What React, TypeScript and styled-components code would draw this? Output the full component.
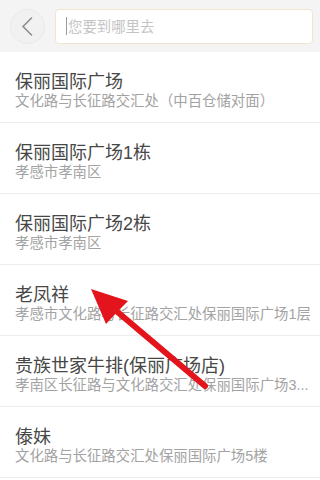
import React from "react";
import styled, { createGlobalStyle } from "styled-components";

const GlobalStyle = createGlobalStyle`
  html, body {
    margin: 0;
    padding: 0;
    background: #ffffff;
  }
  body {
    font-family: "Noto Sans CJK SC", "Noto Sans", "Liberation Sans", sans-serif;
  }
`;

const Page = styled.div`
  position: relative;
  width: 320px;
  height: 480px;
  overflow: hidden;
  background: #ffffff;
`;

const Header = styled.header`
  display: flex;
  align-items: center;
  gap: 10px;
  height: 52px;
  padding: 0 7px 0 10px;
  box-sizing: border-box;
  background: #f4f4f4;
`;

const BackButton = styled.button`
  display: flex;
  align-items: center;
  justify-content: center;
  flex: none;
  width: 35px;
  height: 35px;
  padding: 0 2px 0 0;
  border-radius: 50%;
  border: 1px solid #e9e9e9;
  background: #f1f1f1;
  box-sizing: border-box;
`;

const SearchBox = styled.div`
  display: flex;
  align-items: center;
  flex: 1;
  height: 35px;
  padding: 0 10px;
  box-sizing: border-box;
  background: #ffffff;
  border: 1px solid #f3e4cf;
  border-radius: 4px;
`;

const Caret = styled.span`
  width: 1px;
  height: 18px;
  margin-right: 1px;
  background: #9a9a9a;
`;

const Placeholder = styled.span`
  font-size: 14.4px;
  line-height: 20px;
  color: #c4c4c4;
`;

const List = styled.ul`
  margin: 0;
  padding: 0;
  list-style: none;
`;

const Item = styled.li`
  display: flex;
  flex-direction: column;
  height: 71px;
  padding: 19.5px 10px 0 15px;
  box-sizing: border-box;
  border-bottom: 1px solid #ececec;
  font-family: "Liberation Sans", "Noto Sans CJK SC", sans-serif;
`;

const Title = styled.div`
  font-size: 18px;
  line-height: 21px;
  color: #474747;
  white-space: nowrap;
`;

const Subtitle = styled.div`
  font-size: 14.4px;
  line-height: 16.5px;
  color: #a3a3a3;
  white-space: nowrap;
`;

const Overlay = styled.svg`
  position: absolute;
  top: 0;
  left: 0;
  width: 320px;
  height: 480px;
  pointer-events: none;
`;

const places = [
  { title: "保丽国际广场", sub: "文化路与长征路交汇处（中百仓储对面）" },
  { title: "保丽国际广场1栋", sub: "孝感市孝南区" },
  { title: "保丽国际广场2栋", sub: "孝感市孝南区" },
  { title: "老凤祥", sub: "孝感市文化路与长征路交汇处保丽国际广场1层" },
  { title: "贵族世家牛排(保丽广场店)", sub: "孝南区长征路与文化路交汇处保丽国际广场3..." },
  { title: "傣妹", sub: "文化路与长征路交汇处保丽国际广场5楼" },
];

export default function App() {
  return (
    <Page>
      <GlobalStyle />
      <Header>
        <BackButton aria-label="返回">
          <svg width="12" height="19" viewBox="0 0 12 19">
            <path d="M10.5 1 L2 9.5 L10.5 18" fill="none" stroke="#8c8c8c" strokeWidth="1.6" strokeLinecap="round" strokeLinejoin="round" />
          </svg>
        </BackButton>
        <SearchBox>
          <Caret />
          <Placeholder>您要到哪里去</Placeholder>
        </SearchBox>
      </Header>
      <List>
        {places.map((p) => (
          <Item key={p.title}>
            <Title>{p.title}</Title>
            <Subtitle>{p.sub}</Subtitle>
          </Item>
        ))}
      </List>
      <Overlay viewBox="0 0 320 480">
        <line x1="205" y1="386" x2="114" y2="309" stroke="#e3141b" strokeWidth="6" strokeLinecap="round" />
        <polygon points="91,289 128,301 118,311 106,324" fill="#e3141b" />
      </Overlay>
    </Page>
  );
}
